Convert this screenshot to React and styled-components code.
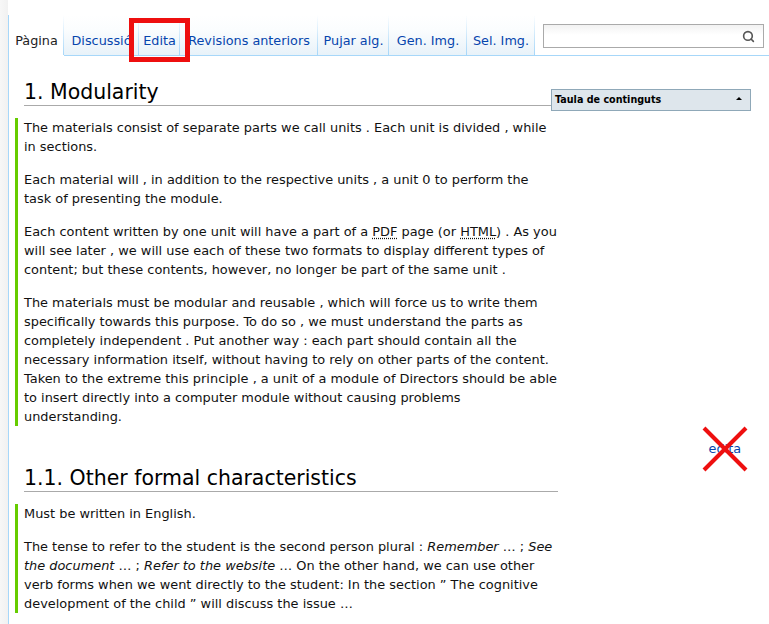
import React from 'react'
import styled, { createGlobalStyle } from 'styled-components'
import { Search } from 'lucide-react'

const GlobalStyle = createGlobalStyle`
  html, body {
    margin: 0;
    padding: 0;
    background: #fff;
    overflow: hidden;
  }
  body {
    font-family: "DejaVu Sans", "Noto Sans", sans-serif;
    color: #111;
  }
`

const linkBlue = '#0645ad'
const tabBlue = '#a7d7f9'

const Page = styled.div`
  position: relative;
  display: flex;
  height: 624px;
  overflow: hidden;
`

const LeftRail = styled.div`
  flex: none;
  width: 8px;
  background: linear-gradient(to right, #f7f7f7, #f1f1f1);
`

const Main = styled.div`
  flex: 1;
  min-width: 0;
  padding-top: 15px;
`

const Column = styled.div`
  border-left: 1px solid ${tabBlue};
  height: 100%;
`

const TabBar = styled.div`
  display: flex;
  height: 41px;
`

const Tab = styled.a`
  position: relative;
  box-sizing: border-box;
  flex: none;
  width: ${({ width }) => width}px;
  height: 41px;
  display: flex;
  align-items: flex-end;
  justify-content: center;
  padding-bottom: 5px;
  font-size: 12.8px;
  line-height: 19px;
  color: ${({ active }) => (active ? '#222' : linkBlue)};
  white-space: nowrap;
  overflow: hidden;
  text-decoration: none;
  background: ${({ active }) => (active ? '#fff' : 'linear-gradient(to bottom, #fff 0%, #fbfdfe 35%, #e8f2f9 100%)')};
  border-bottom: 1px solid ${({ active }) => (active ? '#fff' : tabBlue)};

  &::after {
    content: '';
    position: absolute;
    top: 0;
    right: 0;
    bottom: 0;
    width: 1px;
    background: linear-gradient(to bottom, rgba(167, 215, 249, 0) 0%, ${tabBlue} 100%);
  }
`

const TabFiller = styled.div`
  flex: 1;
  display: flex;
  align-items: flex-start;
  border-bottom: 1px solid ${tabBlue};
`

const SearchBox = styled.div`
  box-sizing: border-box;
  width: 221px;
  height: 24px;
  margin: 9px 0 0 8px;
  display: flex;
  align-items: center;
  justify-content: flex-end;
  padding-right: 8px;
  border: 1px solid #aaa;
  background: linear-gradient(to bottom, #f2f2f2 0%, #fff 45%);
  color: #555;
`

const Content = styled.div`
  display: grid;
  grid-template-columns: 543px 1fr;
  align-items: start;
  padding: 24px 0 0 6px;
`

const Heading = styled.h2`
  grid-column: 1;
  margin: ${({ first }) => (first ? '0' : '40px')} 0 12px 9px;
  font-size: 20.48px;
  line-height: 25px;
  font-weight: normal;
  color: #000;
  border-bottom: 1px solid #aaa;
`

const Toc = styled.div`
  grid-column: 2;
  box-sizing: border-box;
  width: 200px;
  height: 22px;
  margin: 9px 0 0 -7px;
  padding: 0 8px 1px 3px;
  display: flex;
  align-items: center;
  justify-content: space-between;
  background: #dee6ec;
  border: 1px solid #8fa8b8;
  font-size: 9.6px;
  font-weight: bold;
  color: #000;
`

const TocToggle = styled.span`
  width: 0;
  height: 0;
  margin-bottom: 2px;
  border-left: 3px solid transparent;
  border-right: 3px solid transparent;
  border-bottom: 3px solid #000;
`

const Block = styled.div`
  grid-column: 1;
  border-left: 3px solid #66cc00;
  padding-left: 6px;
  font-size: 12.92px;
  line-height: 19px;
  color: #111;
`

const Para = styled.p`
  margin: 0 0 14px;

  &:last-child {
    margin-bottom: 0;
  }
`

const Abbr = styled.abbr`
  text-decoration: underline dotted;
  text-underline-offset: 2px;
`

const EditLink = styled.a`
  grid-column: 2;
  justify-self: end;
  margin: 13px 28px 0 0;
  font-size: 12.8px;
  line-height: 19px;
  color: ${linkBlue};
  text-decoration: none;
`

const MarkBox = styled.div`
  position: absolute;
  left: 129px;
  top: 18px;
  width: 61px;
  height: 44px;
  box-sizing: border-box;
  border: 5px solid #ee0f0f;
`

const CrossMark = styled.svg`
  position: absolute;
  left: 702px;
  top: 426px;
`

const tabs = [
  { label: 'Pàgina', width: 55, active: true },
  { label: 'Discussió', width: 75 },
  { label: 'Edita', width: 41 },
  { label: 'Revisions anteriors', width: 138 },
  { label: 'Pujar alg.', width: 71 },
  { label: 'Gen. Img.', width: 78 },
  { label: 'Sel. Img.', width: 68 },
]

export default function App() {
  return (
    <>
      <GlobalStyle />
      <Page>
        <LeftRail />
        <Main>
          <Column>
            <TabBar>
              {tabs.map((tab) => (
                <Tab key={tab.label} width={tab.width} active={tab.active}>
                  {tab.label}
                </Tab>
              ))}
              <TabFiller>
                <SearchBox>
                  <Search size={13} strokeWidth={3} />
                </SearchBox>
              </TabFiller>
            </TabBar>

            <Content>
              <Heading first>1. Modularity</Heading>
              <Toc>
                Taula de continguts
                <TocToggle />
              </Toc>

              <Block>
                <Para>
                  The materials consist of separate parts we call units . Each unit is divided , while in sections.
                </Para>
                <Para>
                  Each material will , in addition to the respective units , a unit 0 to perform the task of presenting the module.
                </Para>
                <Para>
                  Each content written by one unit will have a part of a <Abbr title="Portable Document Format">PDF</Abbr> page
                  (or <Abbr title="HyperText Markup Language">HTML</Abbr>) . As you will see later , we will use each of these two
                  formats to display different types of content; but these contents, however, no longer be part of the same unit .
                </Para>
                <Para>
                  The materials must be modular and reusable , which will force us to write them specifically towards this
                  purpose. To do so , we must understand the parts as completely independent . Put another way : each part
                  should contain all the necessary information itself, without having to rely on other parts of the content.
                  Taken to the extreme this principle , a unit of a module of Directors should be able to insert directly into
                  a computer module without causing problems understanding.
                </Para>
              </Block>

              <Heading>1.1. Other formal characteristics</Heading>
              <EditLink>edita</EditLink>

              <Block>
                <Para>Must be written in English.</Para>
                <Para>
                  The tense to refer to the student is the second person plural : <i>Remember</i> … ; <i>See the document</i> … ;{' '}
                  <i>Refer to the website</i> … On the other hand, we can use other verb forms when we went directly to the
                  student: In the section ” The cognitive development of the child ” will discuss the issue …
                </Para>
              </Block>
            </Content>
          </Column>
        </Main>

        <MarkBox />
        <CrossMark width="46" height="46" viewBox="0 0 46 46">
          <line x1="2" y1="2" x2="44" y2="44" stroke="#ee0f0f" strokeWidth="4" />
          <line x1="44" y1="2" x2="2" y2="44" stroke="#ee0f0f" strokeWidth="4" />
        </CrossMark>
      </Page>
    </>
  )
}
